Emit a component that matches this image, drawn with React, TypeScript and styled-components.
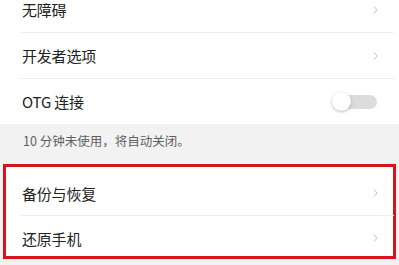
import * as React from 'react';
import styled, { createGlobalStyle } from 'styled-components';

const GlobalStyle = createGlobalStyle`
  html, body {
    margin: 0;
    padding: 0;
    background: #f2f2f2;
    font-family: "Noto Sans CJK SC", "Noto Sans", Roboto, sans-serif;
    -webkit-font-smoothing: antialiased;
  }
`;

const Screen = styled.div`
  width: 399px;
  height: 265px;
  overflow: hidden;
  background: #f2f2f2;
`;

const List = styled.div`
  margin-top: -13px;
  display: flex;
  flex-direction: column;
`;

const Group = styled.div`
  background: #fff;
  display: flex;
  flex-direction: column;
`;

const Highlight = styled.div`
  margin: 0 3px;
  border: 3px solid #d7141c;
  background: #fff;
  display: flex;
  flex-direction: column;
`;

const Row = styled.div<{ $h?: number; $inset?: number; $shift?: number }>`
  height: ${(p) => p.$h ?? 45}px;
  box-sizing: border-box;
  padding: ${(p) => p.$shift ?? 0}px ${(p) => 21 - (p.$inset ?? 0)}px 0 ${(p) => 22 - (p.$inset ?? 0)}px;
  display: flex;
  align-items: center;
  justify-content: space-between;
`;

const Label = styled.span`
  font-size: 15px;
  color: #222;
  letter-spacing: -0.2px;
`;

const Divider = styled.div<{ $inset?: number }>`
  height: 1px;
  background: #efefef;
  margin: 0 ${(p) => 5 - (p.$inset ?? 0)}px 0 ${(p) => 20 - (p.$inset ?? 0)}px;
`;

const Note = styled.div`
  height: 40px;
  box-sizing: border-box;
  padding: 9px 23px 0;
  font-size: 12.5px;
  color: #5f5f5f;
  line-height: 16px;
`;

const Toggle = styled.div`
  position: relative;
  width: 45px;
  height: 20px;
  display: flex;
  align-items: center;
  justify-content: flex-end;
  margin-right: 1px;
`;

const Track = styled.div`
  width: 37px;
  height: 14px;
  border-radius: 7px;
  background: #dcdcdc;
`;

const Knob = styled.div`
  position: absolute;
  left: 0;
  top: 0;
  width: 19px;
  height: 19px;
  border-radius: 50%;
  background: #fff;
  box-shadow: 0 1px 3px rgba(0, 0, 0, 0.28);
`;

const Chevron = () => (
  <svg width="5" height="10" viewBox="0 0 5 10">
    <polyline points="1,1.5 4,5 1,8.5" fill="none" stroke="#c2c2c2" strokeWidth="1" />
  </svg>
);

export default function App() {
  return (
    <Screen>
      <GlobalStyle />
      <List>
        <Group>
          <Row>
            <Label>无障碍</Label>
            <Chevron />
          </Row>
          <Divider />
          <Row>
            <Label>开发者选项</Label>
            <Chevron />
          </Row>
          <Divider />
          <Row>
            <Label>OTG 连接</Label>
            <Toggle>
              <Track />
              <Knob />
            </Toggle>
          </Row>
        </Group>
        <Note>10 分钟未使用，将自动关闭。</Note>
        <Highlight>
          <Row $h={48} $inset={6} $shift={4}>
            <Label>备份与恢复</Label>
            <Chevron />
          </Row>
          <Divider $inset={6} />
          <Row $h={40} $inset={6} $shift={4}>
            <Label>还原手机</Label>
            <Chevron />
          </Row>
        </Highlight>
      </List>
    </Screen>
  );
}
